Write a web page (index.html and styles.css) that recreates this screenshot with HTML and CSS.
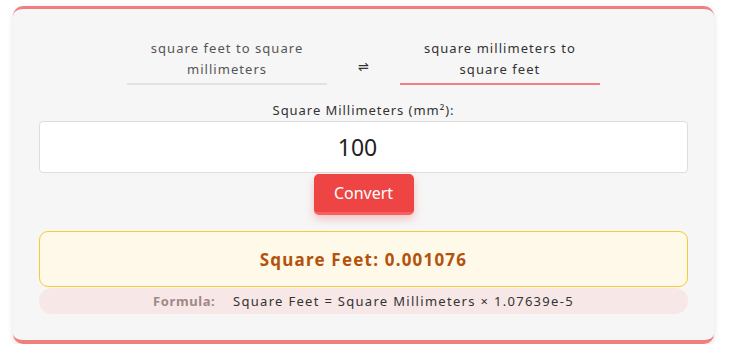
FILE: index.html
```html
<!DOCTYPE html>
<html lang="en">
<head>
    <meta charset="UTF-8">
    <title>Square Millimeters to Square Feet</title>
    <link rel="stylesheet" href="styles.css">
</head>
<body>
    <div class="card">
        <div class="tabs">
            <a class="tab">square feet to square millimeters</a>
            <span class="swap">&#8652;</span>
            <a class="tab active">square millimeters to square feet</a>
        </div>

        <label class="field-label" for="amount">Square Millimeters (mm²):</label>
        <input type="text" id="amount" class="amount" value="100">

        <div class="actions">
            <button type="button" class="convert">Convert</button>
        </div>

        <div class="result">Square Feet: 0.001076</div>
        <div class="formula"><span class="formula-label">Formula:</span> Square Feet = Square Millimeters × 1.07639e-5</div>
    </div>
</body>
</html>
```

FILE: styles.css
```css
body {
    margin: 0;
    background-color: #fff;
    font-family: "Noto Sans", "DejaVu Sans", sans-serif;
    color: #333;
}

.card {
    margin: 6px 0 0 13px;
    width: 701px;
    box-sizing: border-box;
    background-color: #f6f6f6;
    border-top: 3px solid #f08080;
    border-bottom: 4px solid #f08080;
    border-radius: 10px;
    padding: 29px 26px 26px;
    box-shadow: 0 2px 6px rgba(0, 0, 0, 0.12);
}

.tabs {
    display: flex;
    justify-content: center;
    align-items: center;
    gap: 31px;
}

.tab {
    width: 200px;
    text-align: center;
    font-size: 13px;
    line-height: 21px;
    letter-spacing: 1.05px;
    color: #555;
    padding-bottom: 3px;
    border-bottom: 2px solid #e2e2e2;
}

.tab.active {
    color: #333;
    border-bottom-color: #f08080;
}

.swap {
    font-size: 13px;
    color: #333;
    margin-top: 8px;
}

.field-label {
    display: block;
    text-align: center;
    font-size: 13px;
    line-height: 18px;
    margin-top: 16px;
    letter-spacing: 0.95px;
}

.amount {
    display: block;
    width: 100%;
    box-sizing: border-box;
    height: 52px;
    margin-top: 2px;
    padding: 0 12px 0 0;
    border: 1px solid #ddd;
    border-radius: 4px;
    background: #fff;
    text-align: center;
    font-family: inherit;
    font-size: 23px;
    color: #222;
}

.actions {
    display: flex;
    justify-content: center;
    margin-top: 1px;
}

.convert {
    width: 100px;
    height: 41px;
    border: none;
    border-bottom: 3px solid #f76060;
    border-radius: 5px;
    background-color: #ef4444;
    color: #fff;
    font-family: inherit;
    font-size: 16px;
    box-shadow: 0 4px 8px rgba(239, 68, 68, 0.3);
}

.result {
    margin-top: 16px;
    height: 56px;
    box-sizing: border-box;
    display: flex;
    align-items: center;
    justify-content: center;
    background-color: #fef9e8;
    border: 1px solid #f8c936;
    border-radius: 9px;
    color: #b4520c;
    font-size: 17px;
    font-weight: bold;
    letter-spacing: 1.2px;
}

.formula {
    margin-top: 1px;
    height: 26px;
    line-height: 26px;
    text-align: center;
    background-color: #f7e7e7;
    border-radius: 13px;
    font-size: 13px;
    letter-spacing: 1.3px;
    color: #333;
}

.formula-label {
    font-weight: bold;
    color: #a08888;
    letter-spacing: 0.6px;
    margin-right: 13px;
}
```
